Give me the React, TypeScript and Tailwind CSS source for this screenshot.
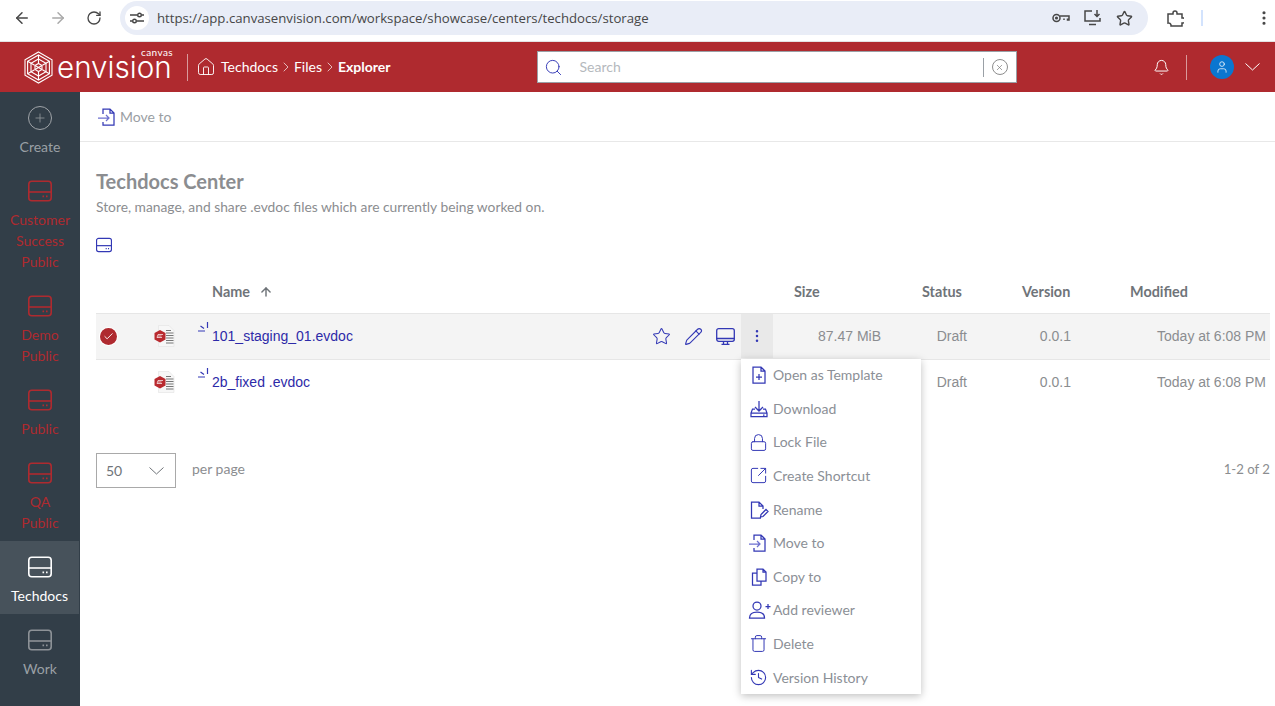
import {
  ArrowLeft,
  ArrowRight,
  ArrowUp,
  Bell,
  Check,
  ChevronRight,
  EllipsisVertical,
  History,
  House,
  Lock,
  Pencil,
  Plus,
  RotateCw,
  Search,
  SquareArrowOutUpRight,
  Star,
  Trash,
  User,
  X,
} from "lucide-react";

const BLUE = "#3338b5";

function DriveIcon({ size = 24, color = "currentColor", width = 1.6 }: { size?: number; color?: string; width?: number }) {
  return (
    <svg width={size} height={size} viewBox="0 0 24 24" fill="none" stroke={color} strokeWidth={width}>
      <rect x="0.8" y="2.2" width="22.4" height="19.6" rx="3" />
      <path d="M0.8 13h22.4" />
      <path d="M14.5 17.4h1.6M18 17.4h1.6" strokeWidth={1.8} />
    </svg>
  );
}

function Wedge({ w = 15 }: { w?: number }) {
  return (
    <svg width={w} height="8" viewBox="0 0 15 8" fill="none" stroke="currentColor" strokeWidth="1">
      <path d="M0.5 0.5 7.500 7 14.500 0.5" />
    </svg>
  );
}

function Logo() {
  return (
    <svg width="29" height="33" viewBox="0 0 29 33" fill="none" stroke="#fff" strokeWidth="1.1">
      <path d="M14.5 1 28 8.700v15.600L14.500 32 1 24.300V8.700z" />
      <path d="M14.5 4 25.400 10.300v12.400L14.500 29 3.600 22.700V10.300z" />
      <path d="M14.5 8 22 12.400v8.200L14.500 25 7 20.600v-8.200z" />
      <path d="M14.5 4v8M14.500 21v8M3.600 10.300l7 4M18.400 18.700l7 4M25.400 10.300l-7 4M10.600 18.700l-7 4" />
      <path d="M11 14.500l3.500-2 3.500 2v4l-3.500 2-3.500-2z" />
      <path d="M11 14.500l7 4M18 14.500l-7 4" />
    </svg>
  );
}

function FileBadge() {
  return (
    <svg width="22" height="22" viewBox="0 0 22 22">
      <path d="M4.500 0.500h10.500l5 5v16H4.500z" fill="#f7f7f7" stroke="#e3e3e3" strokeWidth="0.6" />
      <path d="M12 5.500h5M12 8h7.500M12 10.500h7.500M12 13h7.500M12 15.500h7.500M12 18h7.500" stroke="#777" strokeWidth="1.100" />
      <path d="M6 5 11.500 8v6.500L6 17.500 0.500 14.500V8z" fill="#b92a2f" />
      <path d="M3 12.500 4 9.500h5M4 11h3.500M3 12.500h5" stroke="#fff" strokeWidth="0.7" fill="none" />
    </svg>
  );
}

function LoadGlyph() {
  return (
    <svg width="11" height="11" viewBox="0 0 11 11" fill="none" stroke={BLUE} strokeWidth="1.200" className="mb-[17px]">
      <path d="M0 9h7M2.500 4l3.500 2.500M9.500 0v6" />
    </svg>
  );
}

function MenuIcon({ name }: { name: string }) {
  const cls = "shrink-0";
  const svg = { width: 20, height: 20, viewBox: "0 0 20 20", fill: "none", stroke: BLUE, strokeWidth: 1.25, className: cls };
  if (name === "template")
    return (
      <svg {...svg}>
        <path d="M4 2h8l4 4v12H4zM12 2v4h4M10 9v6M7 12h6" />
      </svg>
    );
  if (name === "download")
    return (
      <svg {...svg}>
        <path d="M10 2v10M6 8l4 4 4-4M6 10H3.500L2 14v3.500h16V14l-1.500-4H14M2 14h16M14 16h1.500" />
      </svg>
    );
  if (name === "lock") return <Lock size={19} stroke={BLUE} strokeWidth={1.25} className={cls} />;
  if (name === "shortcut") return <SquareArrowOutUpRight size={19} stroke={BLUE} strokeWidth={1.25} className={cls} />;
  if (name === "rename")
    return (
      <svg {...svg}>
        <path d="M12 18H2.500V2H10l4 4v3M10 2v4h4M11.500 17l.5-2.500 5-5 2 2-5 5z" />
      </svg>
    );
  if (name === "move")
    return (
      <svg {...svg}>
        <path d="M5 7V2h7l4 4v12H5v-3M12 2v4h4" />
        <path d="M0 11h11M8 8l3 3-3 3" stroke="#6d70cf" />
      </svg>
    );
  if (name === "copy")
    return (
      <svg {...svg}>
        <path d="M8 2h6l3 3v9H8zM14 2v3h3M8 6H3.500v12H12v-4" />
      </svg>
    );
  if (name === "reviewer")
    return (
      <svg {...svg} width={24} height={20} viewBox="0 0 24 20" className="-ml-px -mr-[3px] shrink-0">
        <circle cx="9" cy="6" r="4" />
        <path d="M1.500 18c0-4 3-6 7.500-6s7.500 2 7.500 6zM20 4v5M17.500 6.500h5" />
      </svg>
    );
  if (name === "delete") return <Trash size={19} stroke={BLUE} strokeWidth={1.25} className={cls} />;
  return <History size={19} stroke={BLUE} strokeWidth={1.4} className={cls} />;
}

const navItems = [
  { lines: ["Create"], kind: "create" },
  { lines: ["Customer", "Success", "Public"], kind: "red" },
  { lines: ["Demo", "Public"], kind: "red" },
  { lines: ["Public"], kind: "red" },
  { lines: ["QA", "Public"], kind: "red" },
  { lines: ["Techdocs"], kind: "active" },
  { lines: ["Work"], kind: "muted" },
];

const menuItems = [
  { icon: "template", label: "Open as Template" },
  { icon: "download", label: "Download" },
  { icon: "lock", label: "Lock File" },
  { icon: "shortcut", label: "Create Shortcut" },
  { icon: "rename", label: "Rename" },
  { icon: "move", label: "Move to" },
  { icon: "copy", label: "Copy to" },
  { icon: "reviewer", label: "Add reviewer" },
  { icon: "delete", label: "Delete" },
  { icon: "history", label: "Version History" },
];

const files = [
  { name: "101_staging_01.evdoc", size: "87.47 MiB", selected: true },
  { name: "2b_fixed .evdoc", size: "", selected: false },
];

const gridCols = "grid grid-cols-[58px_44px_543px_32px_112px_86px_104px_195px] items-center";

export default function App() {
  return (
    <div className="h-[706px] w-full overflow-hidden bg-white font-['Lato',sans-serif]">
      {/* Browser bar */}
      <div className="flex h-[42px] items-start border-b border-[#e3e3e3] bg-white pt-px text-[#474747]">
        <div className="flex h-[34px] w-[120px] items-center pl-[13px]">
          <ArrowLeft size={18} strokeWidth={2} />
          <ArrowRight size={18} strokeWidth={2} className="ml-[18px] text-[#a9a9a9]" />
          <RotateCw size={16} strokeWidth={2} className="ml-[19px]" />
        </div>
        <div className="flex h-[34px] w-[1028px] items-center rounded-full bg-[#e9edf7] pl-[5px] pr-[15px]">
          <div className="flex h-6 w-6 items-center justify-center rounded-full bg-white">
            <svg width="14" height="12" viewBox="0 0 14 12" fill="none" stroke="#444" strokeWidth="1.400">
              <path d="M0 3h7M12 3h2M0 9h2M7 9h7" />
              <circle cx="9.500" cy="3" r="1.800" />
              <circle cx="4.500" cy="9" r="1.800" />
            </svg>
          </div>
          <span className="ml-2 mt-[2px] font-['Open_Sans',sans-serif] text-[13.2px] text-[#474747]">
            https://app.canvasenvision.com/workspace/showcase/centers/techdocs/storage
          </span>
          <div className="ml-auto flex items-center gap-[14px]">
            <svg width="18" height="10" viewBox="0 0 18 10" fill="none" stroke="#474747" strokeWidth="1.500">
              <circle cx="4.500" cy="5" r="3.500" />
              <circle cx="4.500" cy="5" r="0.800" />
              <path d="M8 3h9v4h-1.500V5.500M12 7V5.500" />
            </svg>
            <svg width="18" height="16" viewBox="0 0 18 16" fill="none" stroke="#474747" strokeWidth="1.500">
              <path d="M8 1H1v10h15V8M5 14.500h7M13 0v6M10.500 4l2.500 2.500L15.500 4" />
            </svg>
            <Star size={17} strokeWidth={2} />
          </div>
        </div>
        <div className="flex h-[34px] flex-1 items-center pl-[19px]">
          <svg width="17" height="17" viewBox="0 0 17 17" fill="none" stroke="#474747" strokeWidth="1.500">
            <path d="M1 4h5V3a2 2 0 0 1 4 0v1h5v4h1a2.500 2.500 0 0 1 0 5h-1v3H4v-1a2.500 2.500 0 0 0-3-2z" />
          </svg>
          <div className="ml-[17px] h-4 w-0.5 bg-[#d3e3fd]" />
          <EllipsisVertical size={18} strokeWidth={2.200} className="ml-auto mr-[2px]" />
        </div>
      </div>

      {/* App header */}
      <header className="flex h-[50px] items-center bg-[#af2a2f] text-white">
        <div className="ml-6">
          <Logo />
        </div>
        <div className="relative ml-[4px] w-[116px]">
          <span className="block font-['Inter',sans-serif] text-[29.6px] font-light leading-8">envision</span>
          <span className="absolute -top-[5px] right-0 text-[10px] leading-3 tracking-[0.4px]">canvas</span>
        </div>
        <div className="ml-[14px] h-[27px] w-px bg-[#d99a9c]" />
        <House size={20} strokeWidth={1.100} className="ml-[8px]" />
        <span className="ml-[5px] text-sm">Techdocs</span>
        <ChevronRight size={16} strokeWidth={1} />
        <span className="text-sm">Files</span>
        <ChevronRight size={16} strokeWidth={1} />
        <span className="text-sm font-bold">Explorer</span>

        <div className="ml-[146px] flex h-8 w-[480px] items-center border border-[#9aa0a6] bg-white">
          <Search size={19} stroke={BLUE} strokeWidth={1.200} className="ml-[6px]" />
          <span className="ml-[17px] text-sm text-[#b5b9bd]">Search</span>
          <div className="ml-auto h-[19px] w-px bg-[#9aa0a6]" />
          <div className="mx-[8px] flex h-4 w-4 items-center justify-center rounded-full border border-[#8d8d8d]">
            <X size={9} stroke="#777" strokeWidth={1.800} />
          </div>
        </div>

        <Bell size={17} strokeWidth={1.400} className="ml-[136px]" />
        <div className="ml-[16px] h-[25px] w-px bg-[#d99a9c]" />
        <div className="ml-[23px] flex h-6 w-6 items-center justify-center rounded-full bg-[#0a76d0]">
          <User size={14} strokeWidth={1.300} />
        </div>
        <div className="ml-[11px]">
          <Wedge />
        </div>
      </header>

      <div className="flex h-[614px]">
        {/* Sidebar */}
        <aside className="w-20 shrink-0 bg-[#323e48] text-center text-sm">
          {navItems.map((item) => (
            <div key={item.lines.join()} className={`pb-2 pt-[14px] ${item.kind === "active" ? "mr-px bg-[#47525b]" : ""}`}>
              <div
                className={`flex justify-center ${
                  item.kind === "red"
                    ? "text-[#af2a2f]"
                    : item.kind === "active"
                    ? "text-white"
                    : "text-[#8d9297]"
                }`}
              >
                {item.kind === "create" ? (
                  <div className="flex h-6 w-6 items-center justify-center rounded-full border-[1.5px] border-[#a0a4a8]">
                    <Plus size={14} strokeWidth={1.500} />
                  </div>
                ) : (
                  <DriveIcon />
                )}
              </div>
              <div
                className={`mt-[6px] leading-[21px] ${
                  item.kind === "red"
                    ? "text-[#af2a2f]"
                    : item.kind === "active"
                    ? "text-white"
                    : "text-[#9aa0a5]"
                }`}
              >
                {item.lines.map((line) => (
                  <div key={line}>{line}</div>
                ))}
              </div>
            </div>
          ))}
        </aside>

        {/* Main */}
        <main className="min-w-0 flex-1">
          <div className="flex h-[50px] items-center border-b border-[#e8e8e8] pl-[18px]">
            <MenuIcon name="move" />
            <span className="ml-[2px] text-sm text-[#9a9ea3]">Move to</span>
          </div>

          <div className="pl-4 pr-[5px]">
            <h1 className="mt-[25px] text-xl font-bold leading-7 text-[#8b8d90]">Techdocs Center</h1>
            <p className="mt-[2px] text-[13.8px] leading-5 text-[#8b8d90]">
              Store, manage, and share .evdoc files which are currently being worked on.
            </p>
            <div className="mt-[20px] h-4">
              <DriveIcon size={16} color={BLUE} width={1.800} />
            </div>

            {/* Table */}
            <div className={`${gridCols} mt-5 h-10 pb-[2px] text-[14.4px] font-bold text-[#6f7479]`}>
              <div />
              <div />
              <div className="flex items-center pl-[14px]">
                Name
                <ArrowUp size={14} strokeWidth={2.500} className="ml-[9px]" />
              </div>
              <div />
              <div className="pl-[21px]">Size</div>
              <div className="pl-[37px]">Status</div>
              <div className="pl-[51px]">Version</div>
              <div className="pl-[55px]">Modified</div>
            </div>

            <div className="relative">
              {files.map((file) => (
                <div
                  key={file.name}
                  className={`${gridCols} border-[#e6e6e6] pb-px font-['Liberation_Sans',sans-serif] text-sm text-[#8b8d90] ${
                    file.selected ? "h-[47px] border-y bg-[#f4f4f4]" : "h-[45px]"
                  }`}
                >
                  <div className="pl-1">
                    {file.selected && (
                      <div className="flex h-[17px] w-[17px] items-center justify-center rounded-full bg-[#af2a2f] ring-1 ring-white">
                        <Check size={11} stroke="#fff" strokeWidth={2} />
                      </div>
                    )}
                  </div>
                  <FileBadge />
                  <div className="flex items-center">
                    <div className="flex w-[14px] items-center">
                      <LoadGlyph />
                    </div>
                    <span className="text-[#2d2aa8]">{file.name}</span>
                    {file.selected && (
                      <div className="ml-auto mr-[6px] flex items-center gap-[13px]">
                        <Star size={19} stroke={BLUE} strokeWidth={1.300} />
                        <Pencil size={19} stroke={BLUE} strokeWidth={1.400} />
                        <svg width="19" height="17" viewBox="0 0 19 17" fill="none" stroke={BLUE} strokeWidth="1.300">
                          <rect x="0.700" y="0.700" width="17.600" height="12.600" rx="2" />
                          <path d="M0.700 10.500h17.600M7.500 13.500v2.500M11.500 13.500v2.500M5.500 16.300h8" />
                        </svg>
                      </div>
                    )}
                  </div>
                  <div className={`flex h-full items-center justify-center ${file.selected ? "bg-[#e9e9e9]" : ""}`}>
                    {file.selected && <EllipsisVertical size={16} stroke={BLUE} strokeWidth={1.800} />}
                  </div>
                  <div className="pr-1 text-right">{file.size}</div>
                  <div className="pr-1 text-right">Draft</div>
                  <div className="pr-1 text-right">0.0.1</div>
                  <div className="pr-1 text-right">Today at 6:08 PM</div>
                </div>
              ))}

              {/* Row menu */}
              <div className="absolute left-[645px] top-[46px] h-[335px] w-[180px] bg-white shadow-[0_2px_8px_rgba(0,0,0,0.25)]">
                <div className="-mt-[0.6px]">
                  {menuItems.map((item) => (
                    <div key={item.label} className="flex h-[33.6px] items-center pl-2 text-sm text-[#8b8f96]">
                      <span className="flex w-[24px] shrink-0 items-center">
                        <MenuIcon name={item.icon} />
                      </span>
                      {item.label}
                    </div>
                  ))}
                </div>
              </div>
            </div>

            {/* Pagination */}
            <div className="mt-[48px] flex items-center">
              <div className="flex h-[35px] w-20 items-center justify-between border border-[#a9a9a9] pl-[9px] pr-[11px] text-sm text-[#6f7479]">
                50
                <Wedge />
              </div>
              <span className="mb-[3px] ml-4 text-sm text-[#8b8d90]">per page</span>
              <span className="mb-[2px] ml-auto text-[13.2px] text-[#8b8d90]">1-2 of 2</span>
            </div>
          </div>
        </main>
      </div>
    </div>
  );
}
